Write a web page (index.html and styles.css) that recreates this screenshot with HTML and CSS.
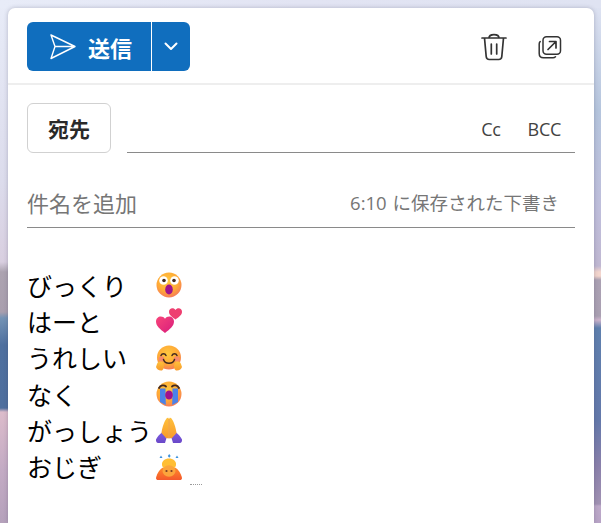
FILE: index.html
```html
<!DOCTYPE html>
<html lang="ja">
<head>
<meta charset="utf-8">
<title>メール作成</title>
<link rel="stylesheet" href="styles.css">
</head>
<body>
<svg class="defs" width="0" height="0" aria-hidden="true">
  <defs>
    <radialGradient id="face" cx="45%" cy="35%" r="70%">
      <stop offset="0" stop-color="#ffc93f"/><stop offset=".6" stop-color="#ffa936"/><stop offset="1" stop-color="#f4735f"/>
    </radialGradient>
    <linearGradient id="heart" x1="0" y1="0" x2="1" y2="1">
      <stop offset="0" stop-color="#f8457a"/><stop offset="1" stop-color="#d81d7c"/>
    </linearGradient>
    <linearGradient id="sleeve" x1="0" y1="0" x2="0" y2="1">
      <stop offset="0" stop-color="#7b5ce0"/><stop offset="1" stop-color="#6a48c8"/>
    </linearGradient>
    <linearGradient id="palm" x1="0" y1="0" x2="0" y2="1">
      <stop offset="0" stop-color="#ffc13c"/><stop offset="1" stop-color="#f79a2c"/>
    </linearGradient>
    <linearGradient id="robe" x1="0" y1="0" x2="0" y2="1">
      <stop offset="0" stop-color="#ff8a2a"/><stop offset="1" stop-color="#f4582c"/>
    </linearGradient>
  </defs>
</svg>
<main class="card">
  <header class="toolbar">
    <div class="send">
      <button class="send-main" type="button">
        <svg class="send-icon" width="28" height="27" viewBox="0 0 28 27"><path d="M2 2 26 13.500 2 25.500 6 13.500Z M6 13.500H26" fill="none" stroke="#fff" stroke-width="1.400" stroke-linejoin="round"/></svg>
        <span>送信</span>
      </button>
      <button class="send-more" type="button" aria-label="送信オプション">
        <svg width="14" height="9" viewBox="0 0 14 9"><path d="M1.500 1.500 7 7l5.500-5.500" fill="none" stroke="#fff" stroke-width="2" stroke-linecap="round" stroke-linejoin="round"/></svg>
      </button>
    </div>
    <div class="tools">
      <svg class="tool" width="26" height="28" viewBox="0 0 26 28" aria-label="破棄"><path d="M1 5H25M8 5C8 .500 18 .500 18 5M3.500 5 5.200 23.500C5.400 25.500 6.500 26.500 8.300 26.500H17.700C19.500 26.500 20.600 25.500 20.800 23.500L22.500 5M10.300 11V21M15.700 11V21" fill="none" stroke="#333" stroke-width="1.700" stroke-linecap="round"/></svg>
      <svg class="tool" width="24" height="24" viewBox="0 0 24 24" aria-label="別ウィンドウで開く"><rect x="5" y="1.800" width="17.500" height="17.500" rx="3.500" fill="none" stroke="#333" stroke-width="1.500"/><path d="M2.200 6.500C1.500 7.200 1.200 8 1.200 9V18.500C1.200 21 3 22.800 5.500 22.800H15C16 22.800 16.800 22.500 17.500 21.800" fill="none" stroke="#333" stroke-width="1.500" stroke-linecap="round"/><path d="M10 14.500 17.500 7M11.500 6.500H18V13" fill="none" stroke="#333" stroke-width="1.700" stroke-linecap="round" stroke-linejoin="round"/></svg>
    </div>
  </header>

  <section class="recipients">
    <button class="to" type="button">宛先</button>
    <div class="to-field">
      <span>Cc</span>
      <span>BCC</span>
    </div>
  </section>

  <section class="subject">
    <span class="subject-label">件名を追加</span>
    <span class="saved">6:10 に保存された下書き</span>
  </section>

  <section class="message">
    <div class="row"><span class="word">びっくり</span>
      <svg class="emoji" width="26" height="26" viewBox="0 0 26 26"><circle cx="13" cy="13" r="12.500" fill="url(#face)"/><circle cx="7.500" cy="8.500" r="4.300" fill="#fff"/><circle cx="18.500" cy="8.500" r="4.300" fill="#fff"/><circle cx="8" cy="8.500" r="1.800" fill="#43291f"/><circle cx="18" cy="8.500" r="1.800" fill="#43291f"/><ellipse cx="13" cy="17.500" rx="3.800" ry="5" fill="#a0128c"/></svg>
    </div>
    <div class="row"><span class="word">はーと</span>
      <svg class="emoji" width="26" height="26" viewBox="0 0 26 26"><path d="M9 25C4 21 0 18 0 13.500 0 10.500 2.300 8.500 4.800 8.500 6.600 8.500 8 9.300 9 10.800 10 9.300 11.500 8.500 13.200 8.500 15.800 8.500 18 10.500 18 13.500 18 18 14 21 9 25Z" fill="url(#heart)"/><path d="M19.500 11.500C16 9 13 7 13 3.800 13 1.600 14.600 .200 16.300 .200 17.700 .200 18.800 .800 19.500 2 20.200 .800 21.300 .200 22.700 .200 24.500 .200 26 1.600 26 3.800 26 7 23 9 19.500 11.500Z" fill="#ee3f70"/></svg>
    </div>
    <div class="row"><span class="word">うれしい</span>
      <svg class="emoji" width="26" height="26" viewBox="0 0 26 26"><circle cx="13" cy="12.500" r="12" fill="url(#face)"/><circle cx="5.500" cy="14" r="2.800" fill="#f78a6a"/><circle cx="20.500" cy="14" r="2.800" fill="#f78a6a"/><path d="M5 10.500C6 8 9 8 10 10.500M16 10.500C17 8 20 8 21 10.500M7.500 14.500C9 19.500 17 19.500 18.500 14.500" fill="none" stroke="#43291f" stroke-width="1.500" stroke-linecap="round"/><path d="M1 19C2 16 6 16 7 18 8.500 20 8.500 24 6 25.500 3 26 .500 24 0 22ZM25 19C24 16 20 16 19 18 17.500 20 17.500 24 20 25.500 23 26 25.500 24 26 22Z" fill="url(#palm)"/></svg>
    </div>
    <div class="row"><span class="word">なく</span>
      <svg class="emoji" width="26" height="26" viewBox="0 0 26 26"><circle cx="13" cy="13" r="12.500" fill="url(#face)"/><path d="M3 7C4.500 4 8 3.500 10 5.500M16 5.500C18 3.500 21.500 4 23 7" fill="none" stroke="#43291f" stroke-width="1.800" stroke-linecap="round"/><path d="M4 7.500H9.500L9.800 24 4 21ZM16.500 7.500H22V21L16.200 24Z" fill="#4b82e8"/><ellipse cx="13" cy="14" rx="3.800" ry="4.500" fill="#a0128c"/></svg>
    </div>
    <div class="row"><span class="word">がっしょう</span>
      <svg class="emoji" width="26" height="26" viewBox="0 0 26 26"><path d="M0 22.500C1 20 3.500 17.500 6 15.500L10.500 21 9 26H2C.500 26-.200 24 0 22.500ZM26 22.500C25 20 22.500 17.500 20 15.500L15.500 21 17 26H24C25.500 26 26.200 24 26 22.500Z" fill="url(#sleeve)"/><path d="M5.500 16C6 11 8.500 4 10.500 1.500 11.500 .200 12.800 .500 12.800 2V21.500L10 21ZM20.500 16C20 11 17.500 4 15.500 1.500 14.500 .200 13.200 .500 13.200 2V21.500L16 21Z" fill="url(#palm)"/><path d="M13 2V21" stroke="#e8891f" stroke-width=".800"/></svg>
    </div>
    <div class="row"><span class="word">おじぎ</span>
      <svg class="emoji" width="26" height="26" viewBox="0 0 26 26"><path d="M3.500 4 5 1.500 6.500 4ZM11.800 2 13.200 0 14.700 2 13.200 3.800ZM19.500 4 21 1.500 22.500 4Z" fill="#3f93dc"/><path d="M0 24C1 19 4 15 7 13.500H19C22 15 25 19 26 24 26 25.500 25 26 24 26H2C1 26 0 25.500 0 24Z" fill="url(#robe)"/><path d="M6 11C5.500 7 9 4.500 13 4.500S20.500 7 20 11C19.500 14 17 15 13 15S6.500 14 6 11Z" fill="#ffbe34"/><ellipse cx="13" cy="17" rx="6.500" ry="5.800" fill="#fba43c"/><circle cx="10.500" cy="17" r="1.100" fill="#7a3c26"/><circle cx="15.500" cy="17" r="1.100" fill="#7a3c26"/></svg>
    </div>
    <div class="clipped-line"></div>
  </section>
</main>
</body>
</html>
```

FILE: styles.css
```css
* {
  box-sizing: border-box;
}

html,
body {
  height: 100%;
  margin: 0;
  overflow: hidden;
}

body {
  padding: 8px 7px 0 8px;
  font-family: "Noto Sans CJK JP", "Noto Sans", sans-serif;
  background-color: #b7a8c0;
  background-image:
    linear-gradient(to right, #e8ecf8, #e2e4f3 50%, #dfe3f2),
    linear-gradient(to bottom, #e8ecf8 0, #dcdcec 180px, #d9cfe0 262px, #aca3b0 272px, #a99fae 312px, #7493b5 318px, #4f709f 345px, #4f6f9e 408px, #dcbccb 412px, #c3abc4 470px, #b5a1bb 523px),
    linear-gradient(to bottom, #e0e4f3 0, #b5c5dd 110px, #bfbedb 210px, #c0b8d2 266px, #f3d5cd 272px, #f3d5cd 276px, #aba1b3 280px, #aaa0b2 316px, #cdb4cc 320px, #5f80ae 328px, #6479ab 420px, #8a80ab 465px, #a192b3 504px, #bda9c9 506px, #b8a4c6 523px);
  background-repeat: no-repeat;
  background-size: 100% 8px, 50% 100%, 50% 100%;
  background-position: left top, left top, right top;
}

.defs {
  position: absolute;
}

button {
  font-family: inherit;
  padding: 0;
  cursor: pointer;
}

.card {
  display: flex;
  flex-direction: column;
  height: 100%;
  padding-top: 14px;
  background: #fff;
  border-radius: 7px 7px 0 0;
  box-shadow: 0 0 4px rgba(60, 60, 90, 0.3);
}

.toolbar {
  display: flex;
  flex: none;
  align-items: center;
  justify-content: space-between;
  height: 63px;
  padding: 0 32px 12px 19px;
  border-bottom: 2px solid #eeeeee;
}

.send {
  display: flex;
  height: 49px;
  border-radius: 6px;
  overflow: hidden;
  background: #106ebe;
}

.send-main,
.send-more {
  display: flex;
  align-items: center;
  border: 0;
  background: transparent;
  color: #fff;
}

.send-main {
  gap: 11px;
  width: 125px;
  padding-left: 22px;
  border-right: 1px solid #fff;
  font-size: 22px;
  font-weight: 700;
}

.send-more {
  justify-content: center;
  width: 38px;
}

.tools {
  display: flex;
  align-items: center;
  gap: 31px;
}

.tool {
  display: block;
}

.recipients {
  display: flex;
  flex: none;
  align-items: stretch;
  gap: 16px;
  height: 50px;
  margin: 18px 19px 0;
}

.to {
  width: 84px;
  border: 1px solid #d1d1d1;
  border-radius: 6px;
  background: #fff;
  color: #292929;
  font-size: 21px;
  font-weight: 700;
}

.to-field {
  display: flex;
  flex: 1;
  align-items: center;
  justify-content: flex-end;
  gap: 27px;
  padding: 3px 14px 0 0;
  border-bottom: 1px solid #8a8a8a;
  color: #424242;
  font-family: "Open Sans", sans-serif;
  font-size: 18px;
  letter-spacing: -0.3px;
}

.subject {
  display: flex;
  flex: none;
  align-items: center;
  justify-content: space-between;
  height: 75px;
  margin: 0 19px;
  padding: 23px 16px 0 0;
  border-bottom: 1px solid #8a8a8a;
  color: #767676;
}

.subject-label {
  font-size: 22px;
}

.saved {
  font-size: 18.500px;
  font-family: "Open Sans", "Noto Sans CJK JP", sans-serif;
  word-spacing: 1px;
}

.message {
  padding: 39px 0 0 19px;
  color: #000;
  font-size: 25px;
}

.row {
  display: flex;
  align-items: center;
  height: 36.3px;
}

.word {
  width: 129px;
  flex: none;
  white-space: nowrap;
  line-height: 1;
}

.emoji {
  display: block;
  flex: none;
}

.clipped-line {
  width: 12px;
  margin: -1px 0 0 163px;
  border-top: 1px dotted #9a9a9a;
}
```
